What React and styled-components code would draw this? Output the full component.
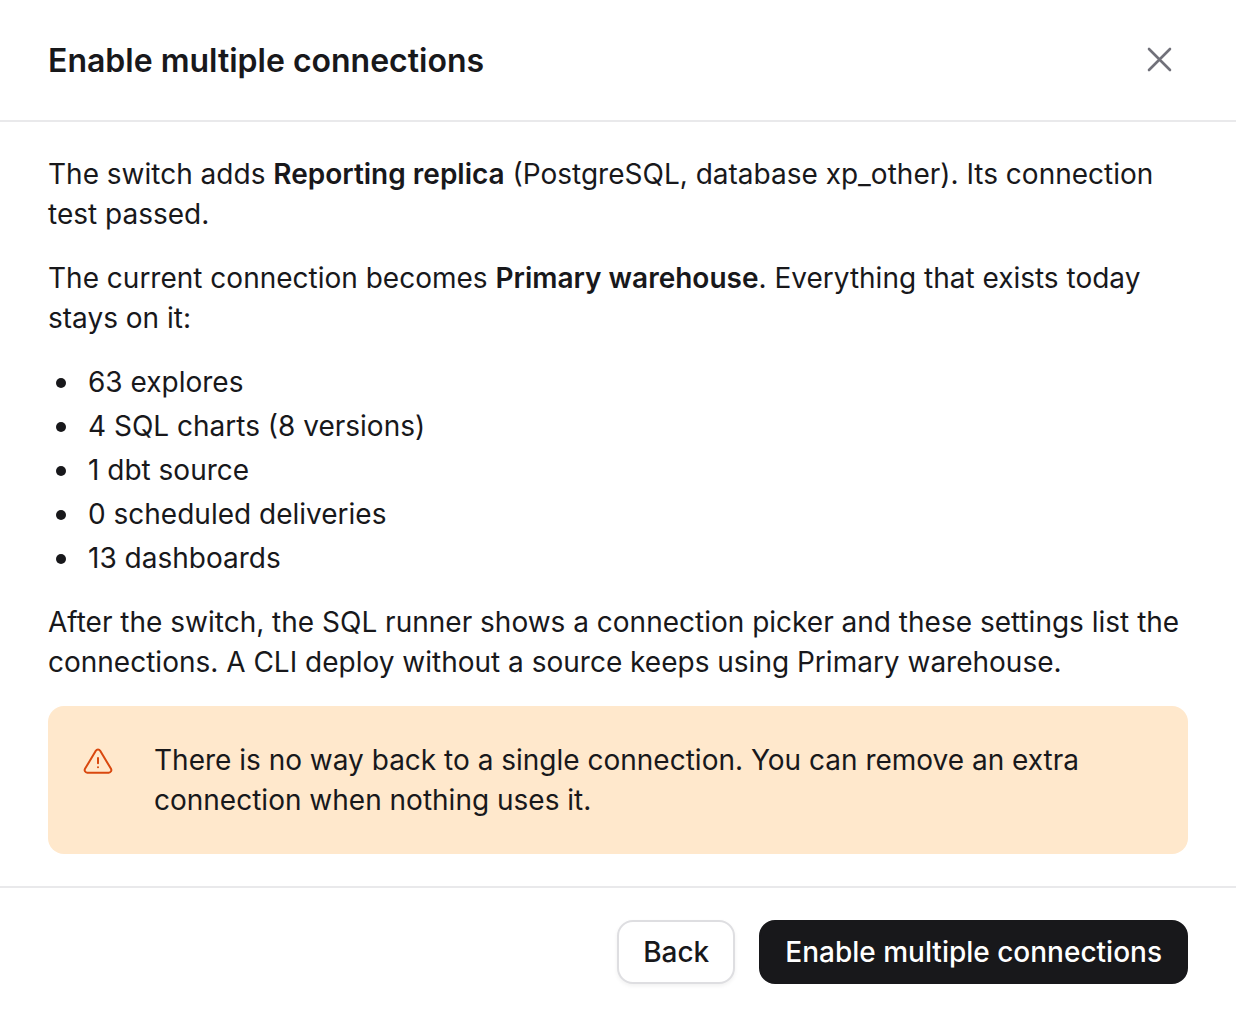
import React from "react";
import styled, { createGlobalStyle } from "styled-components";

const GlobalStyle = createGlobalStyle`
  *, *::before, *::after { box-sizing: border-box; }
  body {
    margin: 0;
    background: #fff;
    color: #18181b;
    font-family: Inter, "Liberation Sans", sans-serif;
    font-size: 28px;
    line-height: 40px;
    -webkit-font-smoothing: antialiased;
  }
`;

const Dialog = styled.section`
  display: flex;
  flex-direction: column;
`;

const Header = styled.header`
  display: flex;
  align-items: center;
  justify-content: space-between;
  padding: 32px 48px;
  border-bottom: 2px solid #e9e9eb;
`;

const Title = styled.h1`
  margin: 0;
  padding-top: 2px;
  font-size: 32px;
  line-height: 48px;
  font-weight: 600;
`;

const CloseButton = styled.button`
  display: flex;
  align-items: center;
  justify-content: center;
  width: 56px;
  height: 56px;
  padding: 0;
  border: 0;
  border-radius: 16px;
  background: transparent;
  color: #71717a;
  cursor: pointer;
`;

const Body = styled.div`
  display: flex;
  flex-direction: column;
  gap: 24px;
  padding: 32px 48px;
`;

const Text = styled.p`
  margin: 0;
`;

const Strong = styled.strong`
  font-weight: 600;
`;

const List = styled.ul`
  display: flex;
  flex-direction: column;
  gap: 4px;
  margin: 0;
  padding: 0 0 0 8px;
  list-style: none;
`;

const ListItem = styled.li`
  display: flex;
  align-items: center;
  gap: 22px;

  &::before {
    content: "";
    flex: none;
    width: 10px;
    height: 10px;
    margin-top: 2px;
    border-radius: 50%;
    background: currentColor;
  }
`;

const Alert = styled.div`
  display: flex;
  align-items: flex-start;
  gap: 40px;
  padding: 34px;
  border-radius: 16px;
  background: #ffe8cc;
`;

const AlertIcon = styled.svg`
  flex: none;
  width: 32px;
  height: 32px;
  margin-top: 6px;
  color: #d9480f;
`;

const Footer = styled.footer`
  display: flex;
  justify-content: flex-end;
  gap: 24px;
  padding: 32px 48px;
  border-top: 2px solid #e9e9eb;
`;

const Button = styled.button`
  height: 64px;
  padding: 0 24px;
  border: 2px solid ${(p) => (p.$primary ? "#18181b" : "#dedee1")};
  border-radius: 16px;
  background: ${(p) => (p.$primary ? "#18181b" : "#fff")};
  box-shadow: ${(p) => (p.$primary ? "none" : "0 2px 4px rgba(0, 0, 0, 0.06)")};
  color: ${(p) => (p.$primary ? "#fff" : "#18181b")};
  font: 500 28px/40px Inter, "Liberation Sans", sans-serif;
  cursor: pointer;
`;

const assets = [
  "63 explores",
  "4 SQL charts (8 versions)",
  "1 dbt source",
  "0 scheduled deliveries",
  "13 dashboards",
];

export default function App() {
  return (
    <>
      <GlobalStyle />
      <Dialog role="dialog" aria-labelledby="dialog-title">
        <Header>
          <Title id="dialog-title">Enable multiple connections</Title>
          <CloseButton type="button" aria-label="Close">
            <svg width="26" height="26" viewBox="0 0 26 26" fill="none" stroke="currentColor" strokeWidth="2.6" strokeLinecap="round" aria-hidden="true">
              <path d="M2 2l21 21M23 2l-21 21" />
            </svg>
          </CloseButton>
        </Header>
        <Body>
          <Text>
            The switch adds <Strong>Reporting replica</Strong> (PostgreSQL, database xp_other). Its connection test passed.
          </Text>
          <Text>
            The current connection becomes <Strong>Primary warehouse</Strong>. Everything that exists today stays on it:
          </Text>
          <List>
            {assets.map((item) => (
              <ListItem key={item}>{item}</ListItem>
            ))}
          </List>
          <Text>
            After the switch, the SQL runner shows a connection picker and these settings list the connections. A CLI deploy without a source keeps using Primary warehouse.
          </Text>
          <Alert role="alert">
            <AlertIcon viewBox="0 0 24 24" fill="none" stroke="currentColor" strokeWidth="1.5" strokeLinecap="round" strokeLinejoin="round" aria-hidden="true">
              <path d="M12 9v4" />
              <path d="M10.363 3.591l-8.106 13.534a1.914 1.914 0 0 0 1.636 2.871h16.214a1.914 1.914 0 0 0 1.636 -2.87l-8.106 -13.536a1.914 1.914 0 0 0 -3.274 0z" />
              <path d="M12 16h.01" />
            </AlertIcon>
            <Text>
              There is no way back to a single connection. You can remove an extra connection when nothing uses it.
            </Text>
          </Alert>
        </Body>
        <Footer>
          <Button type="button">Back</Button>
          <Button type="button" $primary>Enable multiple connections</Button>
        </Footer>
      </Dialog>
    </>
  );
}
